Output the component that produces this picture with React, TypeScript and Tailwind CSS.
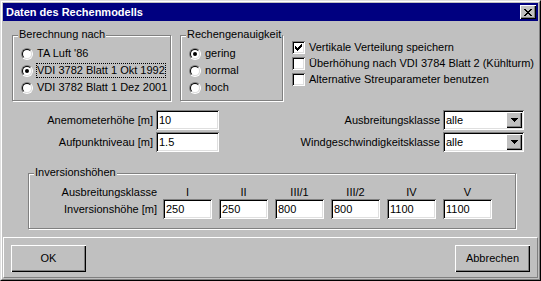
import React from 'react';

const FONT = { fontFamily: '"Liberation Sans", Arial, sans-serif' };

// 3D edges in the old Windows look
const sunken =
  'shadow-[inset_1px_1px_0_#808080,inset_-1px_-1px_0_#fff,inset_2px_2px_0_#000,inset_-2px_-2px_0_#dfdfdf]';
const raised =
  'shadow-[inset_1px_1px_0_#fff,inset_-1px_-1px_0_#000,inset_-2px_-2px_0_#808080]';

function Pixels({ rows, w, h }: { rows: string[]; w: number; h: number }) {
  return (
    <svg width={w} height={h} viewBox={`0 0 ${w} ${h}`} shapeRendering="crispEdges">
      {rows.map((r, y) =>
        r.split('').map((c, x) => (c === 'X' ? <rect key={`${x}-${y}`} x={x} y={y} width={1} height={1} fill="#000" /> : null))
      )}
    </svg>
  );
}

const CLOSE = ['XX....XX', '.XX..XX.', '..XXXX..', '...XX...', '..XXXX..', '.XX..XX.', 'XX....XX'];
const ARROW = ['XXXXXXX', '.XXXXX.', '..XXX..', '...X...'];
const CHECK = ['......X', '.....XX', 'X...XXX', 'XX.XXX.', 'XXXXX..', '.XXX...', '..X....'];

function Radio({ label, checked, focus }: { label: string; checked?: boolean; focus?: boolean }) {
  return (
    <div className="flex items-center h-[17px] gap-[4px]">
      <div className="w-[12px] h-[12px] rounded-full border border-t-[#808080] border-l-[#808080] border-b-white border-r-white">
        <div className="w-full h-full rounded-full bg-white border border-t-black border-l-black border-b-[#dfdfdf] border-r-[#dfdfdf] flex items-center justify-center">
          {checked && <div className="w-[4px] h-[4px] rounded-full bg-black" />}
        </div>
      </div>
      <span className={focus ? 'leading-[13px] outline-1 outline-dotted outline-black' : 'leading-[13px]'}>{label}</span>
    </div>
  );
}

function Check({ label, checked }: { label: string; checked?: boolean }) {
  return (
    <div className="flex items-center h-[16px] gap-[4px]">
      <div className={`w-[13px] h-[13px] bg-white flex items-center justify-center ${sunken}`}>
        {checked && <Pixels rows={CHECK} w={7} h={7} />}
      </div>
      <span className="leading-[13px]">{label}</span>
    </div>
  );
}

function Group({ title, className, children }: { title: string; className: string; children: React.ReactNode }) {
  return (
    <div className={`relative border border-[#808080] shadow-[inset_1px_1px_0_#fff,1px_1px_0_#fff] ${className}`}>
      <span className="absolute -top-[8px] left-[5px] px-[1px] bg-[#c0c0c0] leading-[13px]">{title}</span>
      {children}
    </div>
  );
}

function Edit({ value, className }: { value: string; className: string }) {
  return (
    <div className={`h-[20px] bg-white pl-[3px] flex items-center ${sunken} ${className}`}>
      <span className="leading-[13px]">{value}</span>
    </div>
  );
}

function Combo({ value }: { value: string }) {
  return (
    <div className={`w-[81px] h-[20px] bg-white p-[2px] flex ${sunken}`}>
      <span className="flex-1 pl-[1px] leading-[16px]">{value}</span>
      <div className={`w-[16px] h-[16px] bg-[#c0c0c0] flex items-center justify-center ${raised}`}>
        <Pixels rows={ARROW} w={7} h={4} />
      </div>
    </div>
  );
}

function Button({ label }: { label: string }) {
  return (
    <div className={`w-[75px] h-[27px] bg-[#c0c0c0] flex items-center justify-center ${raised}`}>
      <span className="leading-[13px]">{label}</span>
    </div>
  );
}

const klassen = ['I', 'II', 'III/1', 'III/2', 'IV', 'V'];
const hoehen = ['250', '250', '800', '800', '1100', '1100'];

export default function App() {
  return (
    <div style={FONT} className="w-[541px] h-[281px] text-[11px] text-black bg-[#c0c0c0] border border-t-[#dfdfdf] border-l-[#dfdfdf] border-b-black border-r-black">
      <div className="h-full border border-t-white border-l-white border-b-[#808080] border-r-[#808080] p-[1px] flex flex-col">
        {/* Titelleiste */}
        <div className="h-[18px] bg-[#000080] flex items-center justify-between pl-[3px] pr-[2px]">
          <span className="text-white font-bold leading-[13px]">Daten des Rechenmodells</span>
          <div className={`w-[16px] h-[14px] bg-[#c0c0c0] flex items-center justify-center ${raised}`}>
            <Pixels rows={CLOSE} w={8} h={7} />
          </div>
        </div>

        {/* Einstellungen */}
        <div className="h-[216px] flex flex-col">
          <div className="flex items-start mt-[14px] ml-[9px]">
            <Group title="Berechnung nach" className="w-[159px] h-[66px] pt-[9px] pl-[8px]">
              <Radio label="TA Luft '86" />
              <Radio label="VDI 3782 Blatt 1 Okt 1992" checked focus />
              <Radio label="VDI 3782 Blatt 1 Dez 2001" />
            </Group>
            <Group title="Rechengenauigkeit" className="w-[103px] h-[66px] ml-[9px] pt-[9px] pl-[8px]">
              <Radio label="gering" checked />
              <Radio label="normal" />
              <Radio label="hoch" />
            </Group>
            <div className="flex flex-col ml-[9px] mt-[4px]">
              <Check label="Vertikale Verteilung speichern" checked />
              <Check label="Überhöhung nach VDI 3784 Blatt 2 (Kühlturm)" />
              <Check label="Alternative Streuparameter benutzen" />
            </div>
          </div>

          <div className="flex mt-[9px] pr-[14px]">
            <div className="flex flex-col gap-[2px]">
              <div className="flex items-center gap-[3px]">
                <span className="w-[150px] text-right leading-[13px]">Anemometerhöhe [m]</span>
                <Edit value="10" className="w-[63px]" />
              </div>
              <div className="flex items-center gap-[3px]">
                <span className="w-[150px] text-right leading-[13px]">Aufpunktniveau [m]</span>
                <Edit value="1.5" className="w-[63px]" />
              </div>
            </div>
            <div className="flex flex-col gap-[2px] ml-auto">
              <div className="flex items-center justify-end gap-[3px]">
                <span className="leading-[13px]">Ausbreitungsklasse</span>
                <Combo value="alle" />
              </div>
              <div className="flex items-center justify-end gap-[3px]">
                <span className="leading-[13px]">Windgeschwindigkeitsklasse</span>
                <Combo value="alle" />
              </div>
            </div>
          </div>

          <Group title="Inversionshöhen" className="w-[488px] h-[56px] ml-[25px] mt-[21px] pt-[12px]">
            <div className="flex">
              <span className="w-[128px] text-right leading-[13px]">Ausbreitungsklasse</span>
              <div className="flex gap-[7px] ml-[6px]">
                {klassen.map(k => (
                  <span key={k} className="w-[49px] text-center leading-[13px]">{k}</span>
                ))}
              </div>
            </div>
            <div className="flex items-center">
              <span className="w-[128px] text-right leading-[13px]">Inversionshöhe [m]</span>
              <div className="flex gap-[7px] ml-[6px]">
                {hoehen.map((h, i) => (
                  <Edit key={i} value={h} className="w-[49px]" />
                ))}
              </div>
            </div>
          </Group>
        </div>

        {/* Schaltflächen */}
        <div className="flex-1 flex items-start justify-between pt-[7px] px-[7px] border border-t-white border-l-white border-b-[#808080] border-r-[#808080]">
          <Button label="OK" />
          <Button label="Abbrechen" />
        </div>
      </div>
    </div>
  );
}
